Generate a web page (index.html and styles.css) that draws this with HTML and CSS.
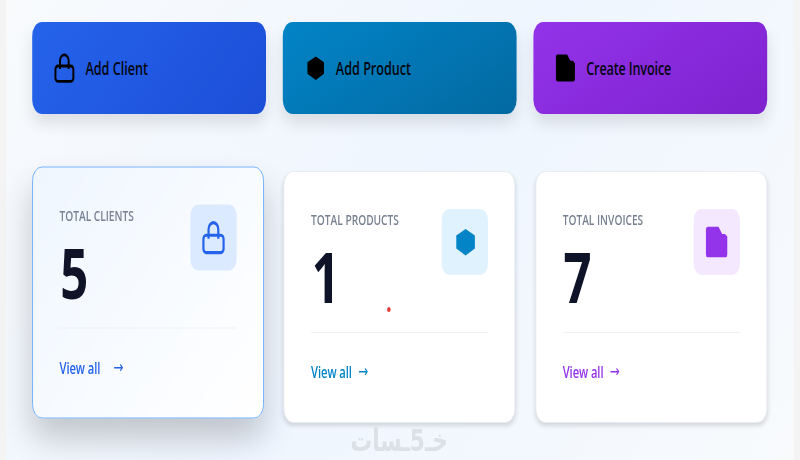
FILE: index.html
```html
<!DOCTYPE html>
<html lang="en">
<head>
    <meta charset="UTF-8">
    <meta name="viewport" content="width=device-width, initial-scale=1.0">
    <title>Dashboard</title>
    <link rel="stylesheet" href="styles.css">
</head>
<body>
    <!-- shared icons -->
    <svg class="sprite" width="0" height="0">
        <symbol id="lock" viewBox="0 0 32 32">
            <rect x="3.2" y="14" width="25.6" height="15.4" rx="3.5" fill="none" stroke="currentColor" stroke-width="2.8"/>
            <path d="M9.7 17V9a6.2 6.2 0 0 1 12.4 0v8" fill="none" stroke="currentColor" stroke-width="2.8"/>
        </symbol>
        <symbol id="box" viewBox="0 0 32 32">
            <path d="M17 4.4 28.8 10.2v11.6L17 27.9 5.2 21.8V10.2z" fill="currentColor"/>
        </symbol>
        <symbol id="file" viewBox="0 0 32 32">
            <path d="M4.6 2.4h13.6l4.6 6.4h3.6l2.9 2.4v15.9a2.4 2.4 0 0 1-2.4 2.4H4.6a2.4 2.4 0 0 1-2.4-2.4V4.8a2.4 2.4 0 0 1 2.4-2.4z" fill="currentColor"/>
        </symbol>
    </svg>

    <div class="screen">
        <div class="page">
            <main class="dashboard">
                <div class="actions">
                    <button class="action action-client"><svg><use href="#lock"/></svg><span>Add Client</span></button>
                    <button class="action action-product"><svg><use href="#box"/></svg><span>Add Product</span></button>
                    <button class="action action-invoice"><svg><use href="#file"/></svg><span>Create Invoice</span></button>
                </div>

                <div class="stats">
                    <div class="card card-client active">
                        <div class="card-header">
                            <div>
                                <p class="label">TOTAL CLIENTS</p>
                                <p class="value">5</p>
                            </div>
                            <div class="tile"><svg><use href="#lock"/></svg></div>
                        </div>
                        <a class="link" href="#"><span>View all</span><span class="arrow">→</span></a>
                    </div>
                    <div class="card card-product">
                        <div class="card-header">
                            <div>
                                <p class="label">TOTAL PRODUCTS</p>
                                <p class="value">1</p>
                            </div>
                            <div class="tile"><svg><use href="#box"/></svg></div>
                        </div>
                        <a class="link" href="#"><span>View all</span><span class="arrow">→</span></a>
                        <i class="dot"></i>
                    </div>
                    <div class="card card-invoice">
                        <div class="card-header">
                            <div>
                                <p class="label">TOTAL INVOICES</p>
                                <p class="value">7</p>
                            </div>
                            <div class="tile"><svg><use href="#file"/></svg></div>
                        </div>
                        <a class="link" href="#"><span>View all</span><span class="arrow">→</span></a>
                    </div>
                </div>
            </main>
            <div class="watermark" dir="rtl" lang="ar">خـ5ـسات</div>
        </div>
    </div>
</body>
</html>
```
FILE: styles.css
```css
* {
    box-sizing: border-box;
}

body {
    margin: 0;
    font-family: "Open Sans", "Noto Sans", sans-serif;
    background-color: #f4f4f5;
}

p {
    margin: 0;
}

.sprite {
    display: block;
}

.screen {
    width: 100%;
    height: 460px;
    overflow: hidden;
}

/* condensed horizontally to 70% */
.page {
    position: relative;
    width: 1142.8px;
    height: 460px;
    padding: 0 9px;
    transform: scaleX(0.7);
    transform-origin: 0 0;
}

.dashboard {
    height: 460px;
    padding: 22px 38px 0 37px;
    background: linear-gradient(135deg, #f8fafc 0%, #eff6ff 50%, #f8fafc 100%);
}

.actions {
    display: grid;
    grid-template-columns: repeat(3, 1fr);
    gap: 23.5px;
    margin-bottom: 56.5px;
}

.action {
    display: flex;
    align-items: center;
    gap: 14px;
    height: 92px;
    padding: 0 30px;
    border: none;
    border-radius: 14px;
    box-shadow: 0 10px 18px rgba(0, 0, 0, 0.1);
    font-family: inherit;
    font-size: 18px;
    font-weight: 600;
    color: #05070f;
    cursor: pointer;
}

.action svg {
    width: 32px;
    height: 32px;
    color: #000;
}

.action-client {
    background: linear-gradient(135deg, #2563eb, #1d4ed8);
}

.action-product {
    background: linear-gradient(155deg, #0284c7, #0369a1);
}

.action-invoice {
    background: linear-gradient(155deg, #9333ea, #7e22ce);
}

.action-invoice span {
    letter-spacing: -0.2px;
}

.stats {
    display: grid;
    grid-template-columns: repeat(3, 1fr);
    gap: 28.5px;
}

.card {
    position: relative;
    height: 252.5px;
    padding: 37px 38px;
    border: 1px solid #e5e9ef;
    border-radius: 14px;
    background-color: #fff;
    box-shadow: 0 3px 5px rgba(0, 0, 0, 0.13);
}

.card.active {
    transform: translateY(-4.5px);
    border: 1.4px solid #60a5fa;
    background: linear-gradient(135deg, #eff6ff, #fff);
    box-shadow: 0 20px 40px rgba(0, 0, 0, 0.2);
}

.card-header {
    display: flex;
    justify-content: space-between;
    align-items: flex-start;
    height: 124px;
    border-bottom: 1px solid #eef2f7;
}

.label {
    font-size: 14.5px;
    font-weight: 600;
    line-height: 21px;
    color: #788191;
}

.value {
    margin-top: 11px;
    padding-left: 1px;
    font-size: 70px;
    font-weight: 700;
    line-height: 71px;
    letter-spacing: -1px;
    color: #0f1328;
}

.tile {
    display: flex;
    align-items: center;
    justify-content: center;
    width: 66px;
    height: 66px;
    border-radius: 11px;
}

.tile svg {
    width: 36px;
    height: 36px;
}

.card-client .tile {
    color: #2563eb;
    background-color: #dbeafe;
}

.card-product .tile {
    color: #0284c7;
    background-color: #e0f2fe;
}

.card-invoice .tile {
    color: #9333ea;
    background-color: #f3e8ff;
}

.link {
    display: inline-flex;
    gap: 9px;
    margin-top: 27px;
    font-size: 16px;
    font-weight: 600;
    line-height: 24px;
    letter-spacing: -0.1px;
    text-decoration: none;
}

.arrow {
    font-family: "DejaVu Sans", sans-serif;
    font-size: 17px;
    font-weight: 400;
    line-height: 22px;
}

.active .link {
    gap: 19px;
}

.card-client .link {
    color: #2563eb;
}

.card-product .link {
    color: #0284c7;
}

.card-invoice .link {
    color: #9333ea;
}

.dot {
    position: absolute;
    left: 147px;
    top: 135px;
    width: 5px;
    height: 5px;
    border-radius: 50%;
    background-color: #e53935;
}

.watermark {
    position: absolute;
    left: 502px;
    top: 423px;
    width: 138px;
    font-family: "DejaVu Sans", sans-serif;
    font-size: 31px;
    font-weight: 700;
    line-height: 34px;
    text-align: center;
    white-space: nowrap;
    color: #dce1e8;
}
```
